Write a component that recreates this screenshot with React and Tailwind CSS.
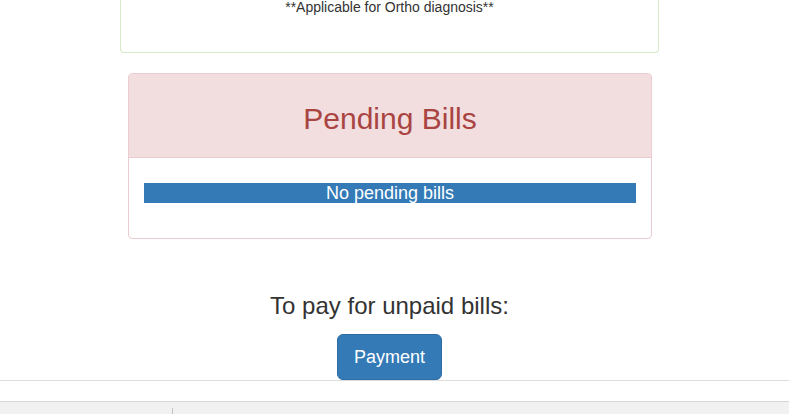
export default function App() {
  return (
    <div
      className="w-[789px] h-[414px] overflow-hidden bg-white text-[#333] flex flex-col"
      style={{ fontFamily: '"Liberation Sans", Arial, sans-serif' }}
    >
      <div className="shrink-0 w-[539px] ml-[120px] flex flex-col">
        <div className="h-[53px] border border-t-0 border-[#d6e9c6] rounded-b-[4px] text-center text-[14px] leading-[14px] text-[#333]">
          **Applicable for Ortho diagnosis**
        </div>
        <div className="mt-[20px] ml-[8px] mr-[7px] border border-[#ebccd1] rounded-[4px] flex flex-col overflow-hidden">
          <div className="h-[84px] bg-[#f2dede] border-b border-[#ebccd1] pt-[28px] text-center text-[30px] leading-[33px] text-[#a94442]">
            Pending Bills
          </div>
          <div className="h-[80px] px-[15px] pt-[25px]">
            <div className="h-[20px] bg-[#337ab7] text-white text-center text-[18px] leading-[20px]">
              No pending bills
            </div>
          </div>
        </div>
      </div>
      <div className="shrink-0 w-[779px] mt-[54px] flex flex-col items-center">
        <div className="text-[24px] leading-[26px] text-[#333]">To pay for unpaid bills:</div>
        <button className="mt-[15px] h-[46px] px-[16px] bg-[#337ab7] border border-[#2e6da4] rounded-[6px] text-white text-[18px] leading-[24px]">
          Payment
        </button>
      </div>
      <div className="shrink-0 h-[21px] border-t border-[#dddddd] bg-white"></div>
      <div className="shrink-0 h-[40px] border-t border-[#d6d6d6] bg-[#f1f1f1] pt-[6px] flex">
        <div className="w-[173px] h-[20px] border-r border-[#c4c4c4]"></div>
      </div>
    </div>
  );
}
